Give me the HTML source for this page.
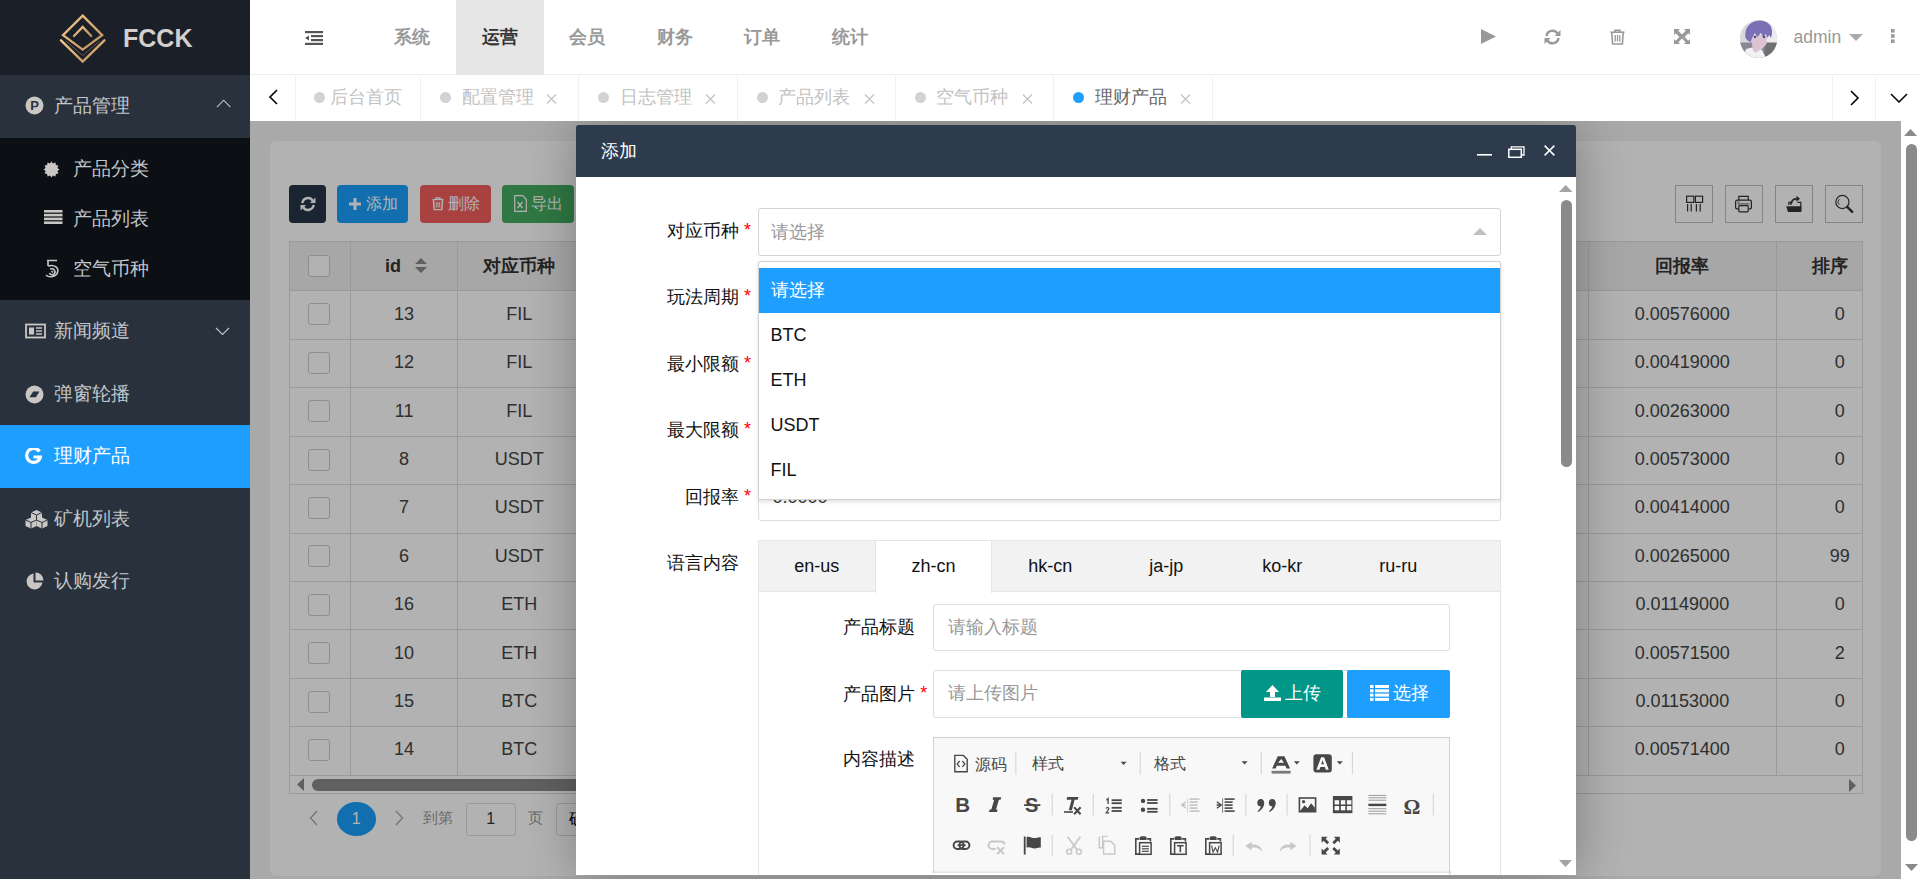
<!DOCTYPE html>
<html><head><meta charset="utf-8">
<style>
*{box-sizing:border-box;margin:0;padding:0}
html,body{width:1920px;height:879px;overflow:hidden;font-family:"Liberation Sans",sans-serif;background:#f2f2f2}
.abs{position:absolute}
svg{display:block}
/* sidebar */
#side{position:absolute;left:0;top:0;width:250px;height:879px;background:#29323c}
#logo{position:absolute;left:0;top:0;width:250px;height:75px;background:#1b2028}
.mi{position:absolute;left:0;width:250px;height:62.5px;color:#c2c6ca;font-size:18.75px;line-height:62.5px}
.mi .t{position:absolute;left:54px;top:0}
.mi .ic{position:absolute;left:25px;top:22px}
#sub{position:absolute;left:0;top:137.5px;width:250px;height:162.5px;background:#0c0f14}
.si{position:absolute;left:0;width:250px;height:50px;line-height:50px;color:#c2c6ca;font-size:18.75px}
.si .t{position:absolute;left:73px;top:0}
/* header */
#hdr{position:absolute;left:250px;top:0;width:1670px;height:75px;background:#fff;border-bottom:1px solid #f0f0f0}
.nav{position:absolute;top:0;height:75px;width:87.5px;text-align:center;line-height:74px;font-size:17.5px;font-weight:bold;color:#999}
/* tabs */
#tabs{position:absolute;left:250px;top:75px;width:1670px;height:46px;background:#fff}
.tb{position:absolute;top:1px;height:45px;border-left:1px solid #f0f0f0;font-size:17.5px;color:#c2c2c2;line-height:45px}
.tb .d{position:absolute;top:16px;width:11px;height:11px;border-radius:50%;background:#d2d2d2}
.tb .t{position:absolute;top:-1px}
.tb .x{position:absolute;top:17.5px}
/* content */
#content{position:absolute;left:250px;top:121px;width:1670px;height:758px;background:#f2f2f2;overflow:hidden}
#panel{position:absolute;left:20px;top:20px;width:1611px;height:735px;background:#fff;border-radius:6px}
.btn{position:absolute;top:64px;height:37.5px;border-radius:4px;color:#fff;font-size:16px;line-height:37.5px}
.obtn{position:absolute;top:64.4px;width:37.5px;height:37.5px;border:1px solid #bdbdbd;border-radius:0;background:#fff}
.cb{display:inline-block;width:22px;height:22px;border:1px solid #ccc;border-radius:3px;background:#fff;vertical-align:middle;position:relative;left:-1px;top:-1px}
#tbl{position:absolute;left:39.4px;top:120.3px;width:1573.3px;height:552.7px;overflow:hidden;border:1px solid #ddd;border-top:none}
table.dt{position:absolute;left:-1px;top:0;border-collapse:collapse;font-size:18px;color:#444;table-layout:fixed;width:1614.4px}
.dt td,.dt th{border:1px solid #ddd;text-align:center;white-space:nowrap;overflow:hidden;padding:0}
.dt th{background:#f0f0f0;height:49.2px;font-weight:bold;color:#333}
.dt td{height:48.42px;padding-bottom:2px}
#hscroll{position:absolute;left:39.4px;top:654px;width:1573.3px;height:18px}
#pager{position:absolute;left:0px;top:681px;width:600px;height:36px}
.dt td .cb{top:0}
#shade{position:absolute;left:0;top:0;width:1670px;height:758px;background:rgba(0,0,0,.3)}
#vscroll{position:absolute;left:1651px;top:0;width:19px;height:758px;background:#fff}
/* modal */
#modal{position:absolute;left:326px;top:4px;width:1000px;height:750px;background:#fff;box-shadow:1px 1px 50px rgba(0,0,0,.3);border-radius:2px 2px 0 0;overflow:hidden}
#mtitle{position:absolute;left:0;top:0;width:1000px;height:52px;background:#2e3b4d;color:#fff;font-size:18px;line-height:52px;padding-left:25px}
#mbody{position:absolute;left:0;top:52px;width:1000px;height:698px}
#mbody .lbl{position:absolute;left:-37px;width:200px;font-size:18px;color:#111;text-align:right;line-height:24px}
#mbody .lbl i{position:absolute;right:-12px;top:-1px;font-style:normal;color:#f00}
#dd{position:absolute;left:181.5px;top:83.5px;width:743px;height:239.5px;background:#fff;border:1px solid #d2d2d2;border-radius:2px;box-shadow:0 2px 4px rgba(0,0,0,.12);padding-top:6px}
#dd .opt{height:45px;line-height:45px;padding-left:12px;font-size:18px;color:#111}
#ltabs{position:absolute;left:181.7px;top:363px;width:743px;height:400px;border:1px solid #e6e6e6;border-top:none}
#lhead{position:absolute;left:-1px;top:0;width:743px;height:51.5px;background:#f2f2f2;border:1px solid #e6e6e6;border-bottom:1px solid #e6e6e6}
.lt{position:absolute;top:0;height:50.5px;line-height:50px;text-align:center;font-size:18px;color:#111}
.lt.act{background:#fff;border-left:1px solid #e6e6e6;border-right:1px solid #e6e6e6;height:51.5px}
.lbl2{position:absolute;left:-49.5px;width:206px;font-size:18px;color:#111;text-align:right;line-height:24px}
.lbl2 i{position:absolute;right:-12px;top:-1px;font-style:normal;color:#f00}
.ubtn{position:absolute;top:130px;height:47.5px;border-radius:2px;color:#fff;font-size:18px;line-height:47px}
#editor{position:absolute;left:174.7px;top:197px;width:516.2px;height:200px;border:1px solid #d1d1d1;background:#f8f8f8}
#msb{position:absolute;left:980px;top:-52px;width:20px;height:750px}
.inp{position:absolute;border:1px solid #ddd;border-radius:3px;background:#fff;font-size:18px;color:#999}
</style></head><body>

<div id="side">
  <div id="logo">
    <svg class="abs" style="left:55px;top:10px" width="57" height="58" viewBox="55 10 57 58">
      <defs><linearGradient id="gd" x1="0" y1="0" x2="1" y2="1"><stop offset="0" stop-color="#f2ca8c"/><stop offset="1" stop-color="#c08f5c"/></linearGradient></defs>
      <path d="M82.7 15.6 L102.2 35.1 L82.7 49.6 L63 35.1 Z" fill="none" stroke="url(#gd)" stroke-width="2.3"/>
      <path d="M61 40.3 L82.7 61.5 L104.4 40.3" fill="none" stroke="url(#gd)" stroke-width="2.4" stroke-linecap="round"/>
      <path d="M66 41 L82.7 55.5 L99.5 41" fill="none" stroke="#6a5a4a" stroke-width="1"/>
      <path d="M74 36 L82.7 27 L91.2 36" fill="none" stroke="url(#gd)" stroke-width="2.3" stroke-linecap="round"/>
    </svg>
    <div class="abs" style="left:123px;top:22px;font-size:25px;font-weight:bold;color:#d3cfcc;line-height:32px">FCCK</div>
  </div>
  <div class="mi" style="top:75px">
    <svg class="ic" style="left:25px;top:21px" width="19" height="19" viewBox="0 0 19 19"><circle cx="9.5" cy="9.5" r="9" fill="#c9c6c4"/><text x="9.6" y="14.2" font-size="13" font-weight="bold" text-anchor="middle" fill="#29323c" font-family="Liberation Sans">P</text></svg>
    <span class="t">产品管理</span>
    <svg class="abs" style="left:216px;top:24px" width="16" height="10" viewBox="0 0 16 10"><path d="M1 8.2 L7.7 1.2 L14.4 8.2" fill="none" stroke="#c2c6ca" stroke-width="1.1"/></svg>
  </div>
  <div id="sub">
    <div class="si" style="top:6.25px">
      <svg class="abs" style="left:43px;top:17px" width="17" height="17" viewBox="0 0 17 17"><path d="M8.5 0.5 L10 2.6 L12.5 1.6 L12.9 4.1 L15.4 4.5 L14.4 7 L16.5 8.5 L14.4 10 L15.4 12.5 L12.9 12.9 L12.5 15.4 L10 14.4 L8.5 16.5 L7 14.4 L4.5 15.4 L4.1 12.9 L1.6 12.5 L2.6 10 L0.5 8.5 L2.6 7 L1.6 4.5 L4.1 4.1 L4.5 1.6 L7 2.6 Z" fill="#c9c6c4"/></svg>
      <span class="t">产品分类</span></div>
    <div class="si" style="top:56.25px">
      <svg class="abs" style="left:43.5px;top:16.5px" width="19" height="15" viewBox="0 0 19 15"><rect x="0" y="0" width="18.5" height="2.6" fill="#c9c6c4"/><rect x="0" y="3.8" width="18.5" height="2.6" fill="#c9c6c4"/><rect x="0" y="7.6" width="18.5" height="2.6" fill="#c9c6c4"/><rect x="0" y="11.4" width="18.5" height="2.6" fill="#c9c6c4"/></svg>
      <span class="t">产品列表</span></div>
    <div class="si" style="top:106.25px">
      <svg class="abs" style="left:44px;top:15px" width="16" height="20" viewBox="0 0 16 20"><path d="M3 1.5 H13 M4 1.5 V7 M4 7 C11 5 15 9 13.5 13.5 C12 18 5 19 2 16 M6 10 C10 9 12 12 10.5 14.5 C9 16.5 6 16 5.5 14 M7.5 12 L9 13.5" fill="none" stroke="#c9c6c4" stroke-width="1.6"/></svg>
      <span class="t">空气币种</span></div>
  </div>
  <div class="mi" style="top:300px">
    <svg class="ic" style="left:25px;top:23px" width="21" height="16" viewBox="0 0 21 16"><rect x="1" y="1.5" width="19" height="13" fill="none" stroke="#c9c6c4" stroke-width="1.8"/><rect x="4" y="4.5" width="5" height="7" fill="#c9c6c4"/><path d="M11 5 H17 M11 8 H17 M11 11 H17" stroke="#c9c6c4" stroke-width="1.5"/></svg>
    <span class="t">新闻频道</span>
    <svg class="abs" style="left:215px;top:27px" width="16" height="10" viewBox="0 0 16 10"><path d="M1 1 L7.5 7.5 L14 1" fill="none" stroke="#c2c6ca" stroke-width="1.1"/></svg>
  </div>
  <div class="mi" style="top:362.5px">
    <svg class="ic" style="left:25px;top:22px" width="19" height="19" viewBox="0 0 19 19"><circle cx="9.5" cy="9.5" r="9" fill="#c9c6c4"/><path d="M4.5 12.3 L8.2 6.5 H14.5 L10.8 12.3 Z" fill="#29323c"/></svg>
    <span class="t">弹窗轮播</span>
  </div>
  <div class="mi" style="top:425px;background:#1e9fff;color:#fff">
    <svg class="ic" style="left:25px;top:23px" width="17" height="17" viewBox="0 0 17 17"><path d="M14.5 3.5 A7 7 0 1 0 15.5 9 H8.5" fill="none" stroke="#fff" stroke-width="3.2"/></svg>
    <span class="t">理财产品</span>
  </div>
  <div class="mi" style="top:487.5px">
    <svg class="ic" style="left:25px;top:22px" width="23" height="19" viewBox="0 0 23 19"><path d="M11.5 0 L17.0 2.5 V8.5 L11.5 11 L6.0 8.5 V2.5 Z" fill="#c9c6c4"/><path d="M6.0 2.5 L11.5 5 L17.0 2.5 M11.5 5 V11" fill="none" stroke="#29323c" stroke-width="1"/><path d="M6 7.5 L11.5 10.0 V16.0 L6 18.5 L0.5 16.0 V10.0 Z" fill="#c9c6c4"/><path d="M0.5 10.0 L6 12.5 L11.5 10.0 M6 12.5 V18.5" fill="none" stroke="#29323c" stroke-width="1"/><path d="M17 7.5 L22.5 10.0 V16.0 L17 18.5 L11.5 16.0 V10.0 Z" fill="#c9c6c4"/><path d="M11.5 10.0 L17 12.5 L22.5 10.0 M17 12.5 V18.5" fill="none" stroke="#29323c" stroke-width="1"/></svg>
    <span class="t">矿机列表</span>
  </div>
  <div class="mi" style="top:550px">
    <svg class="ic" style="left:25px;top:22px" width="19" height="19" viewBox="0 0 19 19"><path d="M8.5 1.5 A8 8 0 1 0 17.5 10.5 H8.5 Z" fill="#c9c6c4"/><path d="M10.5 0.5 A8 8 0 0 1 18.5 8.5 H10.5 Z" fill="#c9c6c4"/></svg>
    <span class="t">认购发行</span>
  </div>
</div>

<div id="hdr">
  <svg class="abs" style="left:55px;top:31px" width="18" height="14" viewBox="0 0 18 14"><rect x="0" y="0" width="18" height="2.2" fill="#555"/><rect x="6" y="4" width="12" height="2.2" fill="#555"/><rect x="6" y="8" width="12" height="2.2" fill="#555"/><rect x="0" y="11.8" width="18" height="2.2" fill="#555"/><path d="M0 7 L4 4.5 L4 9.5 Z" fill="#555"/></svg>
  <div class="nav" style="left:118.5px">系统</div>
  <div class="nav" style="left:206px;background:#e6e6e6;color:#333">运营</div>
  <div class="nav" style="left:293.5px">会员</div>
  <div class="nav" style="left:381px">财务</div>
  <div class="nav" style="left:468.5px">订单</div>
  <div class="nav" style="left:556px">统计</div>
  <!-- right icons -->
  <svg class="abs" style="left:1231px;top:29px" width="15" height="15" viewBox="0 0 15 15"><path d="M0 0 L15 7.5 L0 15 Z" fill="#999"/></svg>
  <svg class="abs" style="left:1294px;top:28.5px" width="17" height="16" viewBox="0 0 17 16"><path d="M2.5 7 A6 6 0 0 1 13.5 4.5" fill="none" stroke="#999" stroke-width="2.4"/><path d="M16.5 1 L16.5 7 L10.5 7 Z" fill="#999"/><path d="M14.5 9 A6 6 0 0 1 3.5 11.5" fill="none" stroke="#999" stroke-width="2.4"/><path d="M0.5 15 L0.5 9 L6.5 9 Z" fill="#999"/></svg>
  <svg class="abs" style="left:1359.5px;top:28.5px" width="15" height="16" viewBox="0 0 15 16"><path d="M0.5 3.2 H14.5" stroke="#999" stroke-width="1.6"/><path d="M5 3 V1.2 H10 V3" fill="none" stroke="#999" stroke-width="1.6"/><path d="M1.8 3.5 L2.6 15 H12.4 L13.2 3.5" fill="none" stroke="#999" stroke-width="1.6"/><path d="M5.2 6 V12.5 M7.5 6 V12.5 M9.8 6 V12.5" stroke="#999" stroke-width="1.3"/></svg>
  <svg class="abs" style="left:1423.5px;top:29px" width="16" height="15" viewBox="0 0 16 15"><path d="M0 0 H6 L4.3 1.7 L8 5.4 L11.7 1.7 L10 0 H16 V6 L14.3 4.3 L10.6 8 L14.3 11.7 L16 10 V15 H10 L11.7 13.3 L8 9.6 L4.3 13.3 L6 15 H0 V10 L1.7 11.7 L5.4 8 L1.7 4.3 L0 6 Z" fill="#999"/></svg>
  <div class="abs" style="left:1489.5px;top:20px;width:37.5px;height:37.5px;border-radius:50%;overflow:hidden;background:#d8c8d4">
    <svg width="38" height="38" viewBox="0 0 38 38"><rect width="38" height="38" fill="#ecebee"/><rect x="0" y="4" width="8" height="18" fill="#d8d8dc"/><rect x="0" y="22.4" width="38" height="16" fill="#8c8794"/><path d="M25 23 H38 V38 H24 Z" fill="#707070"/><path d="M3 38 L6 29 L14 27 L22 30 L26 38 Z" fill="#f2f2f6"/><path d="M11.5 15 H27 L26.5 24 L22 29 L18 31 L16 33 L13 31 L12 24 Z" fill="#dcc2d2"/><path d="M5.5 18 C4 8 10 1 19 0.5 C28 0 33 6 32 14 L31 18 L29 15 L27.5 18 L26 14 L23 17 L21 13 L17 17 L15 13 L12 18 L11 22 L8 21 Z" fill="#7a70b6"/><circle cx="15" cy="17" r="1.2" fill="#4a4a7a"/><circle cx="24" cy="17" r="1.2" fill="#4a4a7a"/></svg>
  </div>
  <div class="abs" style="left:1543.5px;top:22px;font-size:17.5px;color:#999;line-height:30px">admin</div>
  <svg class="abs" style="left:1599px;top:34px" width="14" height="7" viewBox="0 0 14 7"><path d="M0 0 H14 L7 7 Z" fill="#aaa"/></svg>
  <svg class="abs" style="left:1641px;top:29px" width="4" height="14" viewBox="0 0 4 14"><rect x="0" y="0" width="3.6" height="3.6" fill="#999"/><rect x="0" y="5.2" width="3.6" height="3.6" fill="#999"/><rect x="0" y="10.4" width="3.6" height="3.6" fill="#999"/></svg>
</div>

<div id="tabs">
  <svg class="abs" style="left:18px;top:14px" width="10" height="16" viewBox="0 0 10 16"><path d="M9 1 L2 8 L9 15" fill="none" stroke="#000" stroke-width="1.6"/></svg>
  <div class="tb" style="left:45px;width:125px"><span class="d" style="left:18px"></span><span class="t" style="left:34px">后台首页</span></div>
  <div class="tb" style="left:170px;width:158px"><span class="d" style="left:19px"></span><span class="t" style="left:41px">配置管理</span><svg class="x" style="left:125px" width="11" height="10" viewBox="0 0 11 10"><path d="M1 0.5 L10 9.5 M10 0.5 L1 9.5" stroke="#c2c2c2" stroke-width="1.2"/></svg></div>
  <div class="tb" style="left:328px;width:159px"><span class="d" style="left:19px"></span><span class="t" style="left:41px">日志管理</span><svg class="x" style="left:126px" width="11" height="10" viewBox="0 0 11 10"><path d="M1 0.5 L10 9.5 M10 0.5 L1 9.5" stroke="#c2c2c2" stroke-width="1.2"/></svg></div>
  <div class="tb" style="left:487px;width:158px"><span class="d" style="left:19px"></span><span class="t" style="left:40px">产品列表</span><svg class="x" style="left:126px" width="11" height="10" viewBox="0 0 11 10"><path d="M1 0.5 L10 9.5 M10 0.5 L1 9.5" stroke="#c2c2c2" stroke-width="1.2"/></svg></div>
  <div class="tb" style="left:645px;width:158px"><span class="d" style="left:19px"></span><span class="t" style="left:40px">空气币种</span><svg class="x" style="left:126px" width="11" height="10" viewBox="0 0 11 10"><path d="M1 0.5 L10 9.5 M10 0.5 L1 9.5" stroke="#c2c2c2" stroke-width="1.2"/></svg></div>
  <div class="tb" style="left:803px;width:159px;color:#666"><span class="d" style="left:19px;background:#1e9fff"></span><span class="t" style="left:41px">理财产品</span><svg class="x" style="left:126px" width="11" height="10" viewBox="0 0 11 10"><path d="M1 0.5 L10 9.5 M10 0.5 L1 9.5" stroke="#c2c2c2" stroke-width="1.2"/></svg></div>
  <div class="tb" style="left:962px;width:1px"></div>
  <div class="tb" style="left:1582px;width:43px"><svg class="abs" style="left:17px;top:14px" width="10" height="16" viewBox="0 0 10 16"><path d="M1 1 L8 8 L1 15" fill="none" stroke="#000" stroke-width="1.6"/></svg></div>
  <div class="tb" style="left:1625px;width:45px"><svg class="abs" style="left:13.5px;top:16.5px" width="18" height="10" viewBox="0 0 18 10"><path d="M1 1 L9 9 L17 1" fill="none" stroke="#000" stroke-width="1.5"/></svg></div>
</div>

<div id="content">
  <div id="panel"></div>
  <div class="btn" style="left:39.2px;width:37px;background:#283648"><svg class="abs" style="left:11px;top:11px" width="16" height="16" viewBox="0 0 17 16"><path d="M2.5 7 A6 6 0 0 1 13.5 4.5" fill="none" stroke="#fff" stroke-width="2.6"/><path d="M16.5 1 L16.5 7 L10.5 7 Z" fill="#fff"/><path d="M14.5 9 A6 6 0 0 1 3.5 11.5" fill="none" stroke="#fff" stroke-width="2.6"/><path d="M0.5 15 L0.5 9 L6.5 9 Z" fill="#fff"/></svg></div>
  <div class="btn" style="left:87.2px;width:70.8px;background:#1a9ffb"><svg class="abs" style="left:12px;top:13px" width="12" height="12" viewBox="0 0 12 12"><path d="M6 0 V12 M0 6 H12" stroke="#fff" stroke-width="3"/></svg><span class="abs" style="left:28.5px">添加</span></div>
  <div class="btn" style="left:170px;width:70.8px;background:#f25e5e"><svg class="abs" style="left:11.5px;top:12px" width="12" height="13.5" viewBox="0 0 12 16" preserveAspectRatio="none"><path d="M0.5 3 H11.5" stroke="#fff" stroke-width="1.5"/><path d="M4 3 V1 H8 V3" fill="none" stroke="#fff" stroke-width="1.4"/><path d="M1.5 3.5 L2.2 15 H9.8 L10.5 3.5" fill="none" stroke="#fff" stroke-width="1.5"/><path d="M4.3 6 V12.5 M6 6 V12.5 M7.7 6 V12.5" stroke="#fff" stroke-width="1"/></svg><span class="abs" style="left:28px">删除</span></div>
  <div class="btn" style="left:252px;width:71.75px;background:#44ad60"><svg class="abs" style="left:12px;top:10px" width="13" height="17" viewBox="0 0 13 17"><path d="M0.7 0.7 H8.5 L12.3 4.5 V16.3 H0.7 Z" fill="none" stroke="#fff" stroke-width="1.2"/><path d="M3.5 7 L8.5 13 M8.5 7 L3.5 13" stroke="#fff" stroke-width="1.3"/></svg><span class="abs" style="left:28.5px">导出</span></div>
  <div class="obtn" style="left:1425px"><svg class="abs" style="left:-1px;top:-1px" width="37.5" height="37.5" viewBox="1675 185.4 37.5 37.5"><rect x="1686.6" y="196.6" width="7.2" height="6.2" fill="none" stroke="#333" stroke-width="1.2"/><rect x="1695.4" y="196.6" width="7.2" height="6.2" fill="none" stroke="#333" stroke-width="1.2"/><path d="M1687.6 204.5 V211.8 M1691.2 204.5 V211.8 M1696.4 204.5 V211.8 M1700.2 204.5 V211.8" stroke="#333" stroke-width="1.2"/></svg></div>
  <div class="obtn" style="left:1475px"><svg class="abs" style="left:-1px;top:-1px" width="37.5" height="37.5" viewBox="1725 185.4 37.5 37.5"><path d="M1738.8 200.3 V196.7 H1748.2 V200.3" fill="none" stroke="#333" stroke-width="1.2"/><path d="M1738.5 209.2 H1736.8 C1735.9 209.2 1735.6 208.6 1735.6 207.8 V202.2 C1735.6 201 1736.2 200.6 1737.4 200.6 H1749.6 C1750.8 200.6 1751.4 201 1751.4 202.2 V207.8 C1751.4 208.6 1751.1 209.2 1750.2 209.2 H1748.5" fill="none" stroke="#333" stroke-width="1.2"/><rect x="1738.8" y="206" width="9.4" height="6.2" rx="0.8" fill="none" stroke="#333" stroke-width="1.2"/><path d="M1737.5 204.3 H1749.5" stroke="#333" stroke-width="0.8"/><path d="M1737.5 202.4 H1739.5" stroke="#333" stroke-width="0.8"/></svg></div>
  <div class="obtn" style="left:1525px"><svg class="abs" style="left:-1px;top:-1px" width="37.5" height="37.5" viewBox="1775 185.4 37.5 37.5"><path d="M1788.8 205.5 V202.8 H1792.5 M1797.5 202.8 H1800.8 V211" fill="none" stroke="#333" stroke-width="1.2"/><path d="M1786.2 206.6 H1801.3 V212.3 H1788 Z" fill="#333"/><path d="M1790.8 205.2 C1791 201 1793.5 199 1797.5 199.3" fill="none" stroke="#333" stroke-width="1.6"/><path d="M1796.5 196.2 L1800 199.2 L1796.5 202.2 Z" fill="#333"/></svg></div>
  <div class="obtn" style="left:1575px"><svg class="abs" style="left:-1px;top:-1px" width="37.5" height="37.5" viewBox="1825 185.4 37.5 37.5"><circle cx="1842.4" cy="202.4" r="6.6" fill="none" stroke="#333" stroke-width="1.2"/><path d="M1847.2 207.2 L1852.2 212.2" stroke="#333" stroke-width="2.4" stroke-linecap="round"/><path d="M1839.2 199.6 A3.8 3.8 0 0 0 1839.2 205" fill="none" stroke="#333" stroke-width="0.9"/></svg></div>
  <div id="tbl">
  <table class="dt">
  <colgroup><col style="width:61px"><col style="width:106.3px"><col style="width:124px"><col style="width:1006.7px"><col style="width:188.3px"><col style="width:126.8px"></colgroup>
  <tr><th><span class="cb"></span></th><th><span style="position:relative;left:-5px">id</span><svg style="display:inline-block;position:relative;left:8.5px;top:1px" width="12" height="15" viewBox="0 0 12 15"><path d="M6 0 L12 6 H0 Z M0 9 H12 L6 15 Z" fill="#888"/></svg></th><th>对应币种</th><th></th><th>回报率</th><th><span style="position:relative;left:-10px">排序</span></th></tr>
<tr><td><span class="cb"></span></td><td>13</td><td>FIL</td><td></td><td>0.00576000</td><td class="r">0</td></tr>
<tr><td><span class="cb"></span></td><td>12</td><td>FIL</td><td></td><td>0.00419000</td><td class="r">0</td></tr>
<tr><td><span class="cb"></span></td><td>11</td><td>FIL</td><td></td><td>0.00263000</td><td class="r">0</td></tr>
<tr><td><span class="cb"></span></td><td>8</td><td>USDT</td><td></td><td>0.00573000</td><td class="r">0</td></tr>
<tr><td><span class="cb"></span></td><td>7</td><td>USDT</td><td></td><td>0.00414000</td><td class="r">0</td></tr>
<tr><td><span class="cb"></span></td><td>6</td><td>USDT</td><td></td><td>0.00265000</td><td class="r">99</td></tr>
<tr><td><span class="cb"></span></td><td>16</td><td>ETH</td><td></td><td>0.01149000</td><td class="r">0</td></tr>
<tr><td><span class="cb"></span></td><td>10</td><td>ETH</td><td></td><td>0.00571500</td><td class="r">2</td></tr>
<tr><td><span class="cb"></span></td><td>15</td><td>BTC</td><td></td><td>0.01153000</td><td class="r">0</td></tr>
<tr><td><span class="cb"></span></td><td>14</td><td>BTC</td><td></td><td>0.00571400</td><td class="r">0</td></tr>
  </table>
  </div>
  <div id="hscroll"><svg class="abs" style="left:7.5px;top:3px" width="7" height="13" viewBox="0 0 7 13"><path d="M7 0 V13 L0 6.5 Z" fill="#888"/></svg><div class="abs" style="left:23px;top:4px;width:1250px;height:11.5px;border-radius:6px;background:#8a8a8a"></div><svg class="abs" style="left:1560px;top:3.5px" width="7" height="13" viewBox="0 0 7 13"><path d="M0 0 V13 L7 6.5 Z" fill="#888"/></svg></div>
  <div id="pager">
    <svg class="abs" style="left:59px;top:8px" width="9" height="16" viewBox="0 0 9 16"><path d="M8 1 L1.5 8 L8 15" fill="none" stroke="#aaa" stroke-width="1.4"/></svg>
    <div class="abs" style="left:87px;top:0;width:38.5px;height:33.5px;border-radius:50%;background:#1a9ffb;color:#fff;font-size:16px;line-height:33.5px;text-align:center">1</div>
    <svg class="abs" style="left:145px;top:8px" width="9" height="16" viewBox="0 0 9 16"><path d="M1 1 L7.5 8 L1 15" fill="none" stroke="#aaa" stroke-width="1.4"/></svg>
    <span class="abs" style="left:173px;top:6px;font-size:15px;color:#999;line-height:20px">到第</span>
    <div class="abs" style="left:216px;top:1px;width:49.5px;height:32.5px;border:1px solid #ddd;border-radius:3px;background:#fff;font-size:16px;color:#333;text-align:center;line-height:30px">1</div>
    <span class="abs" style="left:278px;top:6px;font-size:15px;color:#999;line-height:20px">页</span>
    <div class="abs" style="left:306px;top:1px;width:80px;height:32.5px;border:1px solid #ddd;border-radius:3px;background:#fff;font-size:16px;color:#000;line-height:30px;padding-left:12px">确定</div>
  </div>
  <div id="shade"></div>
  <div id="modal">
  <div id="mtitle">添加</div>
  <svg class="abs" style="left:900.5px;top:29px" width="15" height="2" viewBox="0 0 15 2"><rect width="15" height="1.6" fill="#fff"/></svg>
  <svg class="abs" style="left:932px;top:21px" width="17" height="12" viewBox="0 0 17 12"><rect x="0.8" y="3.3" width="12.5" height="8" fill="none" stroke="#fff" stroke-width="1.5"/><path d="M3.3 3.3 V0.8 H16 V9 H13.3" fill="none" stroke="#fff" stroke-width="1.3"/></svg>
  <svg class="abs" style="left:967.5px;top:20px" width="11" height="11" viewBox="0 0 11 11"><path d="M0.6 0.6 L10.4 10.4 M10.4 0.6 L0.6 10.4" stroke="#fff" stroke-width="1.5"/></svg>
  <div id="mbody">
    <div class="lbl" style="top:42.4px">对应币种<i>*</i></div>
    <div class="lbl" style="top:108px">玩法周期<i>*</i></div>
    <div class="lbl" style="top:175.2px">最小限额<i>*</i></div>
    <div class="lbl" style="top:240.7px">最大限额<i>*</i></div>
    <div class="lbl" style="top:307.7px">回报率<i>*</i></div>
    <div class="lbl" style="top:373.6px">语言内容</div>
    <div class="inp" style="left:181.5px;top:31.4px;width:743px;height:48px;padding-left:12.5px;line-height:46px;border-color:#d2d2d2">请选择<svg class="abs" style="left:714.8px;top:19px" width="14" height="7" viewBox="0 0 14 7"><path d="M0 7 L7 0 L14 7 Z" fill="#c2c2c2"/></svg></div>
    <div class="inp" style="left:181.5px;top:97.9px;width:743px;height:47px"></div>
    <div class="inp" style="left:181.5px;top:164.4px;width:743px;height:47px"></div>
    <div class="inp" style="left:181.5px;top:230.9px;width:743px;height:47px"></div>
    <div class="inp" style="left:181.5px;top:297.4px;width:743px;height:47px;color:#333;padding-left:14px;line-height:45px">0.0000</div>
    <div id="dd">
      <div class="opt" style="background:#1e9fff;color:#fff">请选择</div>
      <div class="opt">BTC</div>
      <div class="opt">ETH</div>
      <div class="opt">USDT</div>
      <div class="opt">FIL</div>
    </div>
    <div id="ltabs">
      <div id="lhead">
        <div class="lt" style="left:0;width:116px">en-us</div>
        <div class="lt act" style="left:116px;width:117.5px">zh-cn</div>
        <div class="lt" style="left:233.5px;width:116px">hk-cn</div>
        <div class="lt" style="left:349.5px;width:116px">ja-jp</div>
        <div class="lt" style="left:465.5px;width:116px">ko-kr</div>
        <div class="lt" style="left:581.5px;width:116px">ru-ru</div>
      </div>
      <div class="lbl2" style="top:75px">产品标题</div>
      <div class="inp" style="left:174.7px;top:64px;width:516.2px;height:47px;padding-left:14px;line-height:45px">请输入标题</div>
      <div class="lbl2" style="top:141.5px">产品图片<i>*</i></div>
      <div class="inp" style="left:174.7px;top:130px;width:516.2px;height:47.5px;padding-left:14px;line-height:45px">请上传图片</div>
      <div class="ubtn" style="left:482.3px;width:101.6px;background:#009688"><svg class="abs" style="left:23px;top:15px" width="17" height="16" viewBox="0 0 17 16"><path d="M8.5 0 L15 7 H11 V12 H6 V7 H2 Z" fill="#fff"/><rect x="0" y="12.5" width="17" height="3.5" fill="#fff"/></svg><span class="abs" style="left:44.5px">上传</span></div>
      <div class="ubtn" style="left:588.5px;width:103px;background:#1e9fff"><svg class="abs" style="left:22.5px;top:15px" width="19" height="16" viewBox="0 0 19 16"><rect x="0" y="0" width="3.5" height="3" fill="#fff"/><rect x="5" y="0" width="14" height="3" fill="#fff"/><rect x="0" y="4.3" width="3.5" height="3" fill="#fff"/><rect x="5" y="4.3" width="14" height="3" fill="#fff"/><rect x="0" y="8.6" width="3.5" height="3" fill="#fff"/><rect x="5" y="8.6" width="14" height="3" fill="#fff"/><rect x="0" y="12.9" width="3.5" height="3" fill="#fff"/><rect x="5" y="12.9" width="14" height="3" fill="#fff"/></svg><span class="abs" style="left:45.5px">选择</span></div>
      <div class="lbl2" style="top:207px">内容描述</div>
      <div id="editor"><svg class="abs" style="left:-2px;top:-1.5px" width="520" height="140" viewBox="932.4 736.3 520 140"><rect x="1015.8" y="751" width="1" height="22.700000000000045" fill="#d2d2d2"/><rect x="1140.1" y="751" width="1" height="22.700000000000045" fill="#d2d2d2"/><rect x="1261.1" y="751" width="1" height="22.700000000000045" fill="#d2d2d2"/><rect x="1352.3" y="751" width="1" height="22.700000000000045" fill="#d2d2d2"/><rect x="1052.1" y="793" width="1" height="21.700000000000045" fill="#d2d2d2"/><rect x="1093.1" y="793" width="1" height="21.700000000000045" fill="#d2d2d2"/><rect x="1169.7" y="793" width="1" height="21.700000000000045" fill="#d2d2d2"/><rect x="1245.7" y="793" width="1" height="21.700000000000045" fill="#d2d2d2"/><rect x="1287.0" y="793" width="1" height="21.700000000000045" fill="#d2d2d2"/><rect x="1433.2" y="793" width="1" height="21.700000000000045" fill="#d2d2d2"/><rect x="1052.1" y="834" width="1" height="21.700000000000045" fill="#d2d2d2"/><rect x="1233.1" y="834" width="1" height="21.700000000000045" fill="#d2d2d2"/><rect x="1309.9" y="834" width="1" height="21.700000000000045" fill="#d2d2d2"/><path d="M955.2 754.7 H963.8 L967.6 758.6 V771.1 H955.2 Z" fill="none" stroke="#474747" stroke-width="1.4"/><path d="M960 760.3 L957.6 763.2 L960 766.1 M962.8 760.3 L965.2 763.2 L962.8 766.1" fill="none" stroke="#474747" stroke-width="1.3"/><text x="975.5" y="769.2" font-size="16" fill="#474747" font-family="Liberation Sans">源码</text><text x="1032.5" y="768.2" font-size="16" fill="#474747" font-family="Liberation Sans">样式</text><path d="M1121 761 H1127 L1124 764.2 Z" fill="#474747"/><text x="1154.3" y="768.2" font-size="16" fill="#474747" font-family="Liberation Sans">格式</text><path d="M1242 760.5 H1248 L1245 763.7 Z" fill="#474747"/><path d="M1272.5 767.8 L1278.2 755.6 H1284.8 L1290.5 767.8 H1287 L1285.8 765 H1277.2 L1276 767.8 Z M1278.5 762 H1284.5 L1281.5 758.3 Z" fill="#474747" fill-rule="evenodd"/><rect x="1272" y="770.1" width="19" height="2.8" fill="#7a7a7a"/><path d="M1294.2 760.5 H1300.2 L1297.2 763.7 Z" fill="#474747"/><rect x="1313.8" y="753.6" width="18.4" height="18.3" rx="3" fill="#474747"/><path d="M1316.8 769 L1321.5 756.6 H1324.5 L1329.2 769 H1326.2 L1325.2 766.2 H1320.8 L1319.8 769 Z M1321.6 763.6 H1324.4 L1323 759.6 Z" fill="#f8f8f8" fill-rule="evenodd"/><path d="M1337.2 760.5 H1343.2 L1340.2 763.7 Z" fill="#474747"/><text x="955.6" y="811.4" font-size="20.5" font-weight="bold" fill="#474747" font-family="Liberation Sans">B</text><path d="M993.5 796.6 H1001.6 L1001 799 H999.3 L996.4 808.8 H998 L997.4 811.3 H989.4 L990 808.8 H991.7 L994.6 799 H993 Z" fill="#474747"/><text x="1025.5" y="811.4" font-size="20" font-weight="bold" fill="#474747" font-family="Liberation Sans">S</text><rect x="1024.5" y="803.5" width="16.3" height="1.8" fill="#474747"/><path d="M1067.6 796.2 H1078.8 L1078.2 799 H1075 L1072.3 809.5 H1069.2 L1071.9 799 H1067 Z" fill="#474747"/><rect x="1064.4" y="810.5" width="9" height="1.6" fill="#474747"/><path d="M1074.5 806.5 L1081 813.5 M1081 806.5 L1074.5 813.5" stroke="#474747" stroke-width="2"/><path d="M1106.8 799.5 L1108.5 797.8 V803.3" fill="none" stroke="#474747" stroke-width="1.3"/><path d="M1106.6 807.8 C1107 806.5 1109.5 806.5 1109.3 808.2 L1106.6 812.2 H1109.6" fill="none" stroke="#474747" stroke-width="1.2"/><rect x="1112" y="798.6" width="10.1" height="1.8" fill="#474747"/><rect x="1112" y="801.6" width="10.1" height="1.8" fill="#474747"/><rect x="1112" y="806.2" width="10.1" height="1.8" fill="#474747"/><rect x="1112" y="809.4" width="10.1" height="1.8" fill="#474747"/><circle cx="1143.4" cy="800.2" r="2.2" fill="#474747"/><circle cx="1143.4" cy="809" r="2.2" fill="#474747"/><rect x="1147.5" y="798.4" width="10.5" height="1.8" fill="#474747"/><rect x="1147.5" y="801.4" width="10.5" height="1.8" fill="#474747"/><rect x="1147.5" y="807.2" width="10.5" height="1.8" fill="#474747"/><rect x="1147.5" y="810.2" width="10.5" height="1.8" fill="#474747"/><rect x="1190" y="797.6" width="10" height="1.6" fill="#c4c4c4"/><rect x="1190" y="800.6" width="8" height="1.6" fill="#c4c4c4"/><rect x="1190" y="803.6" width="8" height="1.6" fill="#c4c4c4"/><rect x="1190" y="806.6" width="8" height="1.6" fill="#c4c4c4"/><rect x="1190" y="809.6" width="10" height="1.6" fill="#c4c4c4"/><rect x="1187.5" y="797.6" width="1" height="14.4" fill="#c4c4c4" opacity="0.7"/><path d="M1186.5 801 L1182 804.3 L1186.5 807.6 M1182 804.3 H1186" fill="none" stroke="#c4c4c4" stroke-width="1.3"/><rect x="1225" y="797.6" width="10" height="1.6" fill="#474747"/><rect x="1225" y="800.6" width="8" height="1.6" fill="#474747"/><rect x="1225" y="803.6" width="8" height="1.6" fill="#474747"/><rect x="1225" y="806.6" width="8" height="1.6" fill="#474747"/><rect x="1225" y="809.6" width="10" height="1.6" fill="#474747"/><rect x="1222.5" y="797.6" width="1" height="14.4" fill="#474747" opacity="0.7"/><path d="M1217.2 801 L1221.7 804.3 L1217.2 807.6 M1217 804.3 H1221" fill="none" stroke="#474747" stroke-width="1.3"/><path d="M1261 798.3 C1264 798.3 1265 801 1264.5 803.5 C1264 807 1261 810 1258.5 811.3 L1258 810.2 C1259.8 809 1261 807 1261.2 805.5 C1258.5 805.8 1257.7 803.8 1257.7 802 C1257.7 799.8 1259.2 798.3 1261 798.3 Z" fill="#474747"/><path d="M1272.5 798.3 C1275.5 798.3 1276.5 801 1276 803.5 C1275.5 807 1272.5 810 1270 811.3 L1269.5 810.2 C1271.3 809 1272.5 807 1272.7 805.5 C1270 805.8 1269.2 803.8 1269.2 802 C1269.2 799.8 1270.7 798.3 1272.5 798.3 Z" fill="#474747"/><rect x="1299.8" y="797.3" width="16.2" height="13.7" fill="none" stroke="#474747" stroke-width="1.6"/><path d="M1300.5 810.3 L1305 804.5 L1308 807.5 L1311.5 802.5 L1315.3 807 V810.3 Z" fill="#474747"/><circle cx="1304" cy="801" r="1.6" fill="#474747"/><rect x="1333.3" y="795.3" width="19.5" height="17.2" fill="#474747"/><rect x="1335" y="799.5" width="4.5" height="4.3" fill="#f8f8f8"/><rect x="1341.2" y="799.5" width="4.5" height="4.3" fill="#f8f8f8"/><rect x="1347.3" y="799.5" width="4.5" height="4.3" fill="#f8f8f8"/><rect x="1335" y="805.3" width="4.5" height="4.3" fill="#f8f8f8"/><rect x="1341.2" y="805.3" width="4.5" height="4.3" fill="#f8f8f8"/><rect x="1347.3" y="805.3" width="4.5" height="4.3" fill="#f8f8f8"/><rect x="1368.8" y="794.2" width="17.9" height="1" fill="#9a9a9a"/><rect x="1368.8" y="796.6" width="17.9" height="1" fill="#9a9a9a"/><rect x="1368.8" y="799" width="17.9" height="1" fill="#9a9a9a"/><rect x="1368.8" y="803" width="17.9" height="2.4" fill="#474747"/><rect x="1368.8" y="807.5" width="17.9" height="1" fill="#9a9a9a"/><rect x="1368.8" y="810" width="17.9" height="1" fill="#9a9a9a"/><rect x="1368.8" y="812.6" width="17.9" height="1" fill="#9a9a9a"/><text x="1404" y="813" font-size="21" font-weight="bold" fill="#474747" font-family="Liberation Serif">Ω</text><rect x="954" y="840.8" width="10" height="7.4" rx="3.7" fill="none" stroke="#474747" stroke-width="2"/><rect x="959.8" y="840.8" width="10" height="7.4" rx="3.7" fill="none" stroke="#474747" stroke-width="2"/><rect x="958" y="843.6" width="8" height="1.8" fill="#474747"/><path d="M996 848.2 H992.7 A3.7 3.7 0 0 1 992.7 840.8 H1001.5 A3.7 3.7 0 0 1 1005 844" fill="none" stroke="#c8c8c8" stroke-width="2"/><path d="M997.5 846.5 L1004.5 853.4 M1004.5 846.5 L997.5 853.4" stroke="#c8c8c8" stroke-width="2"/><rect x="1024.2" y="835.8" width="1.8" height="18.1" fill="#474747"/><path d="M1027 836.3 C1030 835.2 1033 838 1036 837.3 C1038 836.8 1040 836.3 1041.2 836.5 V847 C1039 846.6 1037.5 847.8 1035 847.8 C1032 847.8 1030 845.8 1027 847 Z" fill="#474747"/><path d="M1068 836 L1077.5 849 M1080.8 836 L1071.3 849" stroke="#c8c8c8" stroke-width="1.8"/><circle cx="1069.5" cy="851" r="2.5" fill="none" stroke="#c8c8c8" stroke-width="1.5"/><circle cx="1079.3" cy="851" r="2.5" fill="none" stroke="#c8c8c8" stroke-width="1.5"/><path d="M1103 839 V835.7 H1108 M1103 839 V847 H1099.7 V835.7" fill="none" stroke="#c8c8c8" stroke-width="1.4"/><path d="M1104 840.5 H1111 L1115.2 844.7 V853.3 H1104 Z" fill="none" stroke="#c8c8c8" stroke-width="1.4"/><path d="M1139.5 838.2 H1136.2 V853.4000000000001 H1140" fill="none" stroke="#474747" stroke-width="1.6"/><path d="M1147.5 838.2 H1150.8 V840.7" fill="none" stroke="#474747" stroke-width="1.6"/><path d="M1140 839.2 V836.9000000000001 C1140 835.0 1147 835.0 1147 836.9000000000001 V839.2 Z" fill="#474747"/><rect x="1140" y="842" width="11.5" height="11.6" fill="none" stroke="#474747" stroke-width="1.5"/><rect x="1142.3" y="845" width="7" height="1.2" fill="#474747"/><rect x="1142.3" y="847.5" width="7" height="1.2" fill="#474747"/><rect x="1142.3" y="850" width="7" height="1.2" fill="#474747"/><path d="M1174.5 838.2 H1171.2 V853.4000000000001 H1175" fill="none" stroke="#474747" stroke-width="1.6"/><path d="M1182.5 838.2 H1185.8 V840.7" fill="none" stroke="#474747" stroke-width="1.6"/><path d="M1175 839.2 V836.9000000000001 C1175 835.0 1182 835.0 1182 836.9000000000001 V839.2 Z" fill="#474747"/><rect x="1175" y="842" width="11.5" height="11.6" fill="none" stroke="#474747" stroke-width="1.5"/><path d="M1177.5 845 H1184 M1180.75 845 V851.5" stroke="#474747" stroke-width="1.5"/><path d="M1209.5 838.2 H1206.2 V853.4000000000001 H1210" fill="none" stroke="#474747" stroke-width="1.6"/><path d="M1217.5 838.2 H1220.8 V840.7" fill="none" stroke="#474747" stroke-width="1.6"/><path d="M1210 839.2 V836.9000000000001 C1210 835.0 1217 835.0 1217 836.9000000000001 V839.2 Z" fill="#474747"/><rect x="1210" y="842" width="11.5" height="11.6" fill="none" stroke="#474747" stroke-width="1.5"/><path d="M1212 845 L1213.5 851.5 L1215.75 847 L1218 851.5 L1219.5 845" fill="none" stroke="#474747" stroke-width="1.1"/><path d="M1262.7 851.4 C1262 845 1257 843.5 1252 844 V840.8 L1245.8 845.3 L1252 849.8 V846.8 C1256.5 846.5 1260.5 847.5 1262.7 851.4 Z" fill="#c8c8c8"/><path d="M1280 851.4 C1280.7 845 1285.7 843.5 1290.7 844 V840.8 L1296.9 845.3 L1290.7 849.8 V846.8 C1286.2 846.5 1282.2 847.5 1280 851.4 Z" fill="#c8c8c8"/><path d="M1322 836 H1328 L1326 838 L1329.5 841.5 L1327.5 843.5 L1324 840 L1322 842 Z" fill="#474747"/><path d="M1340.2 836 H1334.2 L1336.2 838 L1332.7 841.5 L1334.7 843.5 L1338.2 840 L1340.2 842 Z" fill="#474747"/><path d="M1322 853.7 H1328 L1326 851.7 L1329.5 848.2 L1327.5 846.2 L1324 849.7 L1322 847.7 Z" fill="#474747"/><path d="M1340.2 853.7 H1334.2 L1336.2 851.7 L1332.7 848.2 L1334.7 846.2 L1338.2 849.7 L1340.2 847.7 Z" fill="#474747"/><rect x="932.4" y="871" width="520" height="1" fill="#d1d1d1"/><rect x="933.4" y="872" width="516" height="10" fill="#fff"/></svg></div>
    </div>
    <div id="msb">
      <svg class="abs" style="left:3px;top:60px" width="13.5" height="7" viewBox="0 0 13.5 7"><path d="M0 7 L6.75 0 L13.5 7 Z" fill="#a3a3a3"/></svg>
      <div class="abs" style="left:4.5px;top:75px;width:11px;height:266.5px;border-radius:6px;background:#8a8a8a"></div>
      <svg class="abs" style="left:3px;top:735px" width="13" height="7" viewBox="0 0 13 7"><path d="M0 0 L6.5 7 L13 0 Z" fill="#a3a3a3"/></svg>
    </div>
  </div>
</div>


  <div id="vscroll">
    <svg class="abs" style="left:3px;top:8px" width="13" height="7" viewBox="0 0 13 7"><path d="M0 7 L6.5 0 L13 7 Z" fill="#8a8a8a"/></svg>
    <div class="abs" style="left:5px;top:23px;width:11px;height:697px;border-radius:6px;background:#8a8a8a"></div>
    <svg class="abs" style="left:4px;top:743px" width="13" height="7" viewBox="0 0 13 7"><path d="M0 0 L6.5 7 L13 0 Z" fill="#8a8a8a"/></svg>
  </div>
</div>

</body></html>
